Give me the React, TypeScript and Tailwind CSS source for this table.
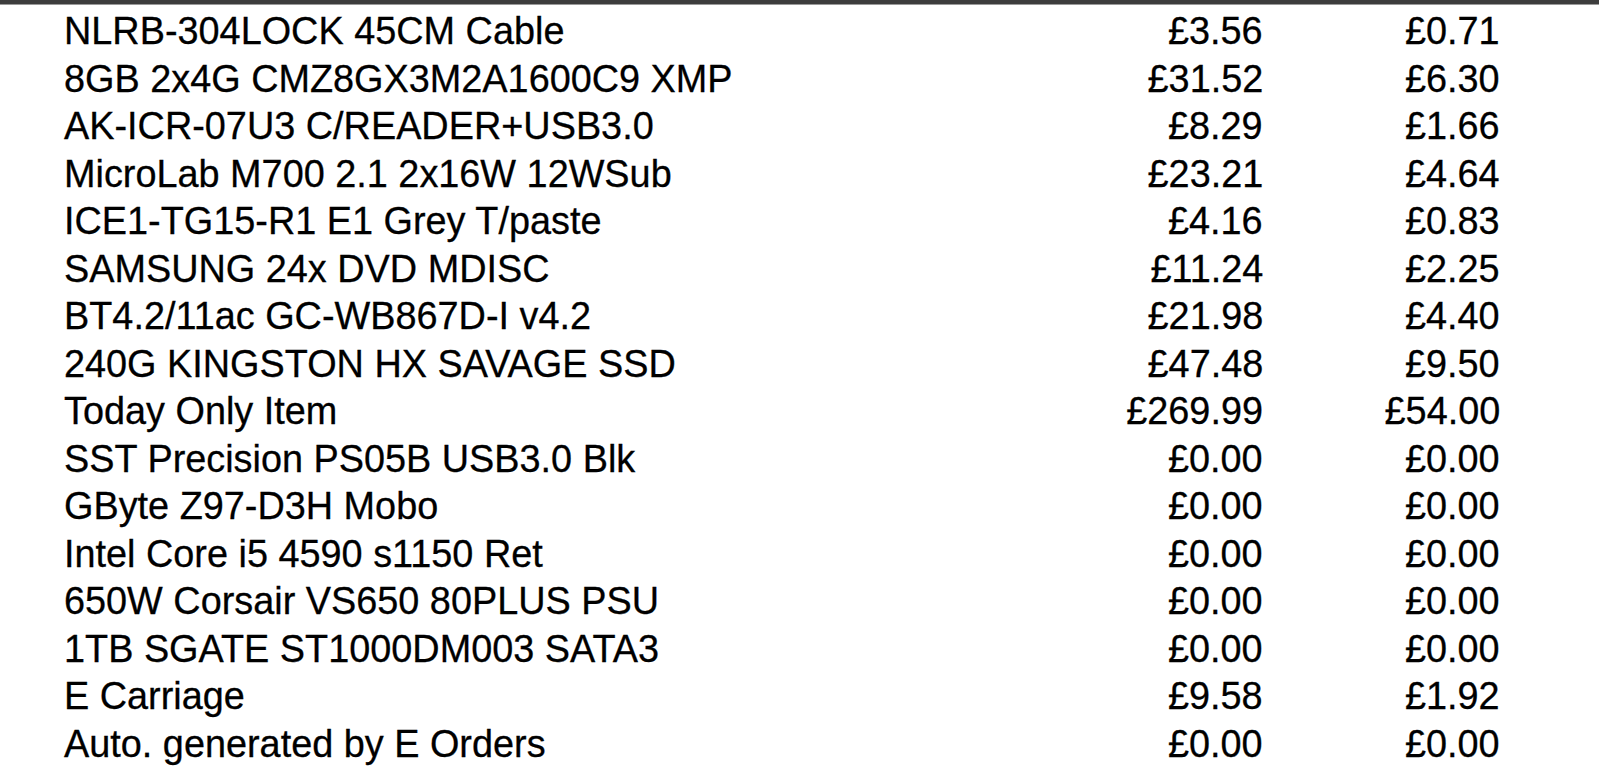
import React from "react";

const rows: [string, string, string][] = [
  ["NLRB-304LOCK 45CM Cable", "£3.56", "£0.71"],
  ["8GB 2x4G CMZ8GX3M2A1600C9 XMP", "£31.52", "£6.30"],
  ["AK-ICR-07U3 C/READER+USB3.0", "£8.29", "£1.66"],
  ["MicroLab M700 2.1 2x16W 12WSub", "£23.21", "£4.64"],
  ["ICE1-TG15-R1 E1 Grey T/paste", "£4.16", "£0.83"],
  ["SAMSUNG 24x DVD MDISC", "£11.24", "£2.25"],
  ["BT4.2/11ac GC-WB867D-I v4.2", "£21.98", "£4.40"],
  ["240G KINGSTON HX SAVAGE SSD", "£47.48", "£9.50"],
  ["Today Only Item", "£269.99", "£54.00"],
  ["SST Precision PS05B USB3.0 Blk", "£0.00", "£0.00"],
  ["GByte Z97-D3H Mobo", "£0.00", "£0.00"],
  ["Intel Core i5 4590 s1150 Ret", "£0.00", "£0.00"],
  ["650W Corsair VS650 80PLUS PSU", "£0.00", "£0.00"],
  ["1TB SGATE ST1000DM003 SATA3", "£0.00", "£0.00"],
  ["E Carriage", "£9.58", "£1.92"],
  ["Auto. generated by E Orders", "£0.00", "£0.00"],
];

export default function App() {
  return (
    <div
      className="w-[1599px] h-[773px] overflow-hidden bg-white flex flex-col"
      style={{ fontFamily: '"Liberation Sans", Arial, sans-serif' }}
    >
      <div className="h-[4px] bg-[#3d3d3d]" />
      <div className="h-[1px] bg-[#9a9a9a]" />
      <div className="flex flex-col pt-[2px] text-[39px] text-black leading-none [-webkit-text-stroke:0.3px_#000]">
        {rows.map(([name, price, vat], i) => (
          <div key={i} className="flex items-center h-[47.5px]">
            <div className="w-[1000px] pl-[64px] whitespace-nowrap">
              <span className="inline-block scale-x-[0.97] origin-left">{name}</span>
            </div>
            <div className="w-[263px] text-right">
              <span className="inline-block scale-x-[0.97] origin-right">{price}</span>
            </div>
            <div className="w-[237px] text-right">
              <span className="inline-block scale-x-[0.97] origin-right">{vat}</span>
            </div>
          </div>
        ))}
      </div>
    </div>
  );
}
